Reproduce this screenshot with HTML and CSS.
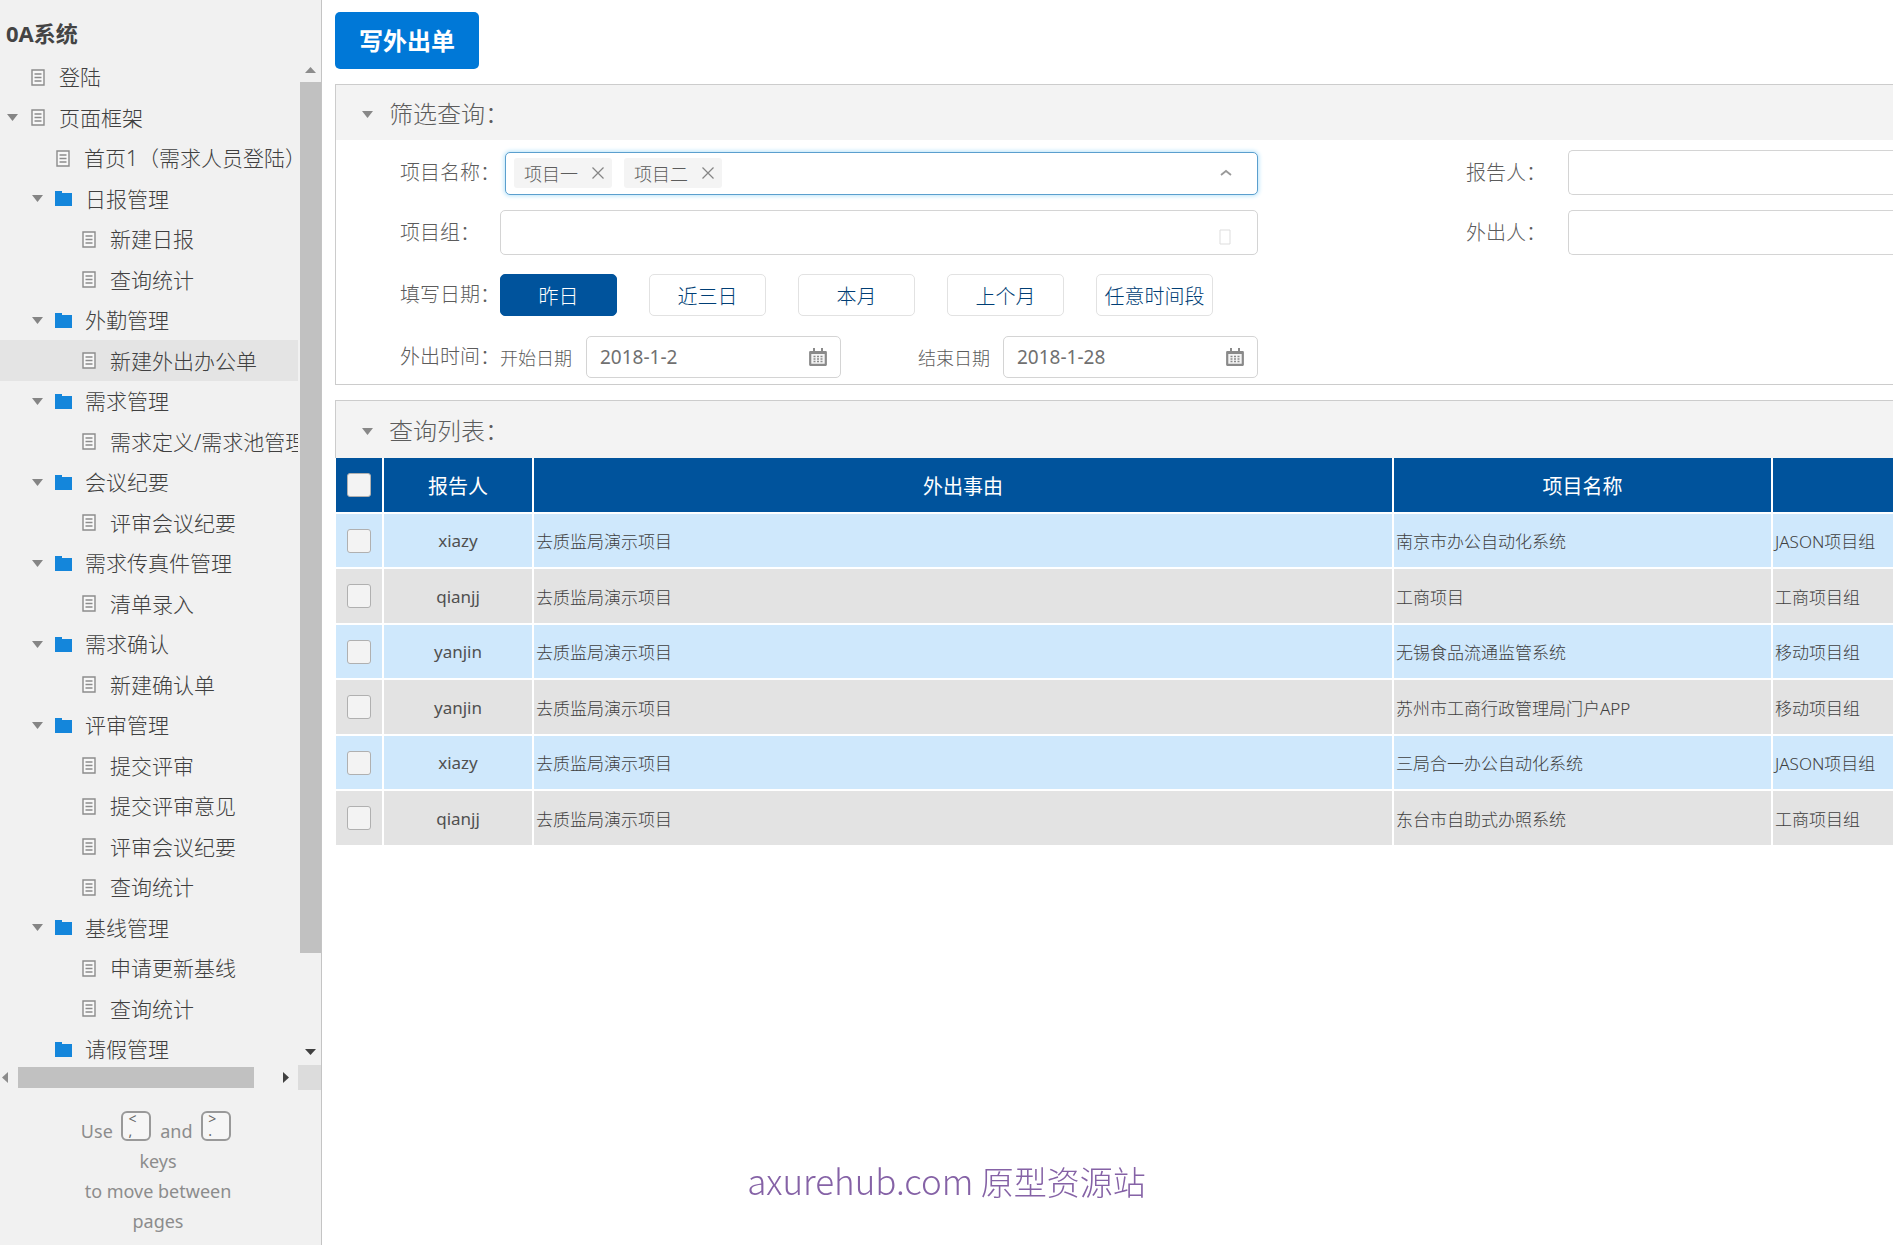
FILE: index.html
```html
<!DOCTYPE html>
<html lang="zh-CN">
<head>
<meta charset="utf-8">
<title>0A系统</title>
<link rel="stylesheet" href="styles.css">
</head>
<body>
<svg class="defs" aria-hidden="true">
  <symbol id="doc" viewBox="0 0 14 17"><path d="M1 1h12v15H1z" fill="#f8f8f8" stroke="#8c8c8c" stroke-width="1.4"/><path d="M3.500 5h7M3.500 8.500h7M3.500 12h7" stroke="#8c8c8c" stroke-width="1.300"/></symbol>
  <symbol id="folder" viewBox="0 0 17 15"><path d="M0 0h7v2h10v13H0z" fill="#1486db"/></symbol>
  <symbol id="down" viewBox="0 0 11 7"><path d="M0 0h11L5.500 7z" fill="currentColor"/></symbol>
  <symbol id="calendar" viewBox="0 0 18 18"><path d="M1.200 4.200h15.600v12.600H1.200z" fill="#f4f4f4" stroke="#8a8a8a" stroke-width="2.200" stroke-linejoin="round"/><path d="M1 4.500h16" stroke="#8a8a8a" stroke-width="3"/><path d="M5 0v4M13 0v4" stroke="#8a8a8a" stroke-width="2"/><path d="M4.500 8.500h2m1.500 0h2m1.500 0h2M4.500 11h2m1.500 0h2m1.500 0h2M4.500 13.500h2m1.500 0h2m1.500 0h2" stroke="#8a8a8a" stroke-width="1.500"/></symbol>
  <symbol id="close" viewBox="0 0 12 12"><path d="M.5.5l11 11M11.500.5l-11 11" stroke="#858585" stroke-width="1.200"/></symbol>
</svg>
<div class="app">
  <aside class="sidebar">
    <h1 class="site">0A系统</h1>
    <div class="scroller">
      <nav class="tree">
        <a href="#"><i class="arrow"></i><svg class="doc"><use href="#doc"/></svg>登陆</a>
        <a href="#"><svg class="arrow"><use href="#down"/></svg><svg class="doc"><use href="#doc"/></svg>页面框架</a>
        <a href="#" class="l1"><i class="arrow"></i><svg class="doc"><use href="#doc"/></svg>首页1（需求人员登陆）</a>
        <a href="#" class="l1"><svg class="arrow"><use href="#down"/></svg><svg class="folder"><use href="#folder"/></svg>日报管理</a>
        <a href="#" class="l2"><i class="arrow"></i><svg class="doc"><use href="#doc"/></svg>新建日报</a>
        <a href="#" class="l2"><i class="arrow"></i><svg class="doc"><use href="#doc"/></svg>查询统计</a>
        <a href="#" class="l1"><svg class="arrow"><use href="#down"/></svg><svg class="folder"><use href="#folder"/></svg>外勤管理</a>
        <a href="#" class="l2 current"><i class="arrow"></i><svg class="doc"><use href="#doc"/></svg>新建外出办公单</a>
        <a href="#" class="l1"><svg class="arrow"><use href="#down"/></svg><svg class="folder"><use href="#folder"/></svg>需求管理</a>
        <a href="#" class="l2"><i class="arrow"></i><svg class="doc"><use href="#doc"/></svg>需求定义/需求池管理</a>
        <a href="#" class="l1"><svg class="arrow"><use href="#down"/></svg><svg class="folder"><use href="#folder"/></svg>会议纪要</a>
        <a href="#" class="l2"><i class="arrow"></i><svg class="doc"><use href="#doc"/></svg>评审会议纪要</a>
        <a href="#" class="l1"><svg class="arrow"><use href="#down"/></svg><svg class="folder"><use href="#folder"/></svg>需求传真件管理</a>
        <a href="#" class="l2"><i class="arrow"></i><svg class="doc"><use href="#doc"/></svg>清单录入</a>
        <a href="#" class="l1"><svg class="arrow"><use href="#down"/></svg><svg class="folder"><use href="#folder"/></svg>需求确认</a>
        <a href="#" class="l2"><i class="arrow"></i><svg class="doc"><use href="#doc"/></svg>新建确认单</a>
        <a href="#" class="l1"><svg class="arrow"><use href="#down"/></svg><svg class="folder"><use href="#folder"/></svg>评审管理</a>
        <a href="#" class="l2"><i class="arrow"></i><svg class="doc"><use href="#doc"/></svg>提交评审</a>
        <a href="#" class="l2"><i class="arrow"></i><svg class="doc"><use href="#doc"/></svg>提交评审意见</a>
        <a href="#" class="l2"><i class="arrow"></i><svg class="doc"><use href="#doc"/></svg>评审会议纪要</a>
        <a href="#" class="l2"><i class="arrow"></i><svg class="doc"><use href="#doc"/></svg>查询统计</a>
        <a href="#" class="l1"><svg class="arrow"><use href="#down"/></svg><svg class="folder"><use href="#folder"/></svg>基线管理</a>
        <a href="#" class="l2"><i class="arrow"></i><svg class="doc"><use href="#doc"/></svg>申请更新基线</a>
        <a href="#" class="l2"><i class="arrow"></i><svg class="doc"><use href="#doc"/></svg>查询统计</a>
        <a href="#" class="l1"><i class="arrow"></i><svg class="folder"><use href="#folder"/></svg>请假管理</a>
      </nav>
      <div class="vbar">
        <svg class="tip-v"><path d="M0 6h11L5.500 0z" fill="#8c8c8c"/></svg>
        <div class="vthumb"></div>
        <svg class="tip-v"><path d="M0 0h11L5.500 6z" fill="#404040"/></svg>
      </div>
      <div class="hbar">
        <svg class="tip-h"><path d="M6 0v11L0 5.500z" fill="#8c8c8c"/></svg>
        <div class="hthumb"></div>
        <svg class="tip-h"><path d="M0 0v11l6-5.500z" fill="#404040"/></svg>
      </div>
      <div class="corner"></div>
    </div>
    <p class="hint">Use <kbd>&lt;<br>,</kbd> and <kbd>&gt;<br>.</kbd><br>keys<br>to move between<br>pages</p>
  </aside>

  <main class="main">
    <button type="button" class="primary">写外出单</button>

    <section class="panel filter">
      <h2 class="heading"><svg class="fold"><use href="#down"/></svg>筛选查询：</h2>
      <form class="form">
        <div class="fields">
          <div class="row">
            <label class="name" for="project">项目名称：</label>
            <div class="multi">
              <span class="tag">项目一<button type="button" aria-label="×"><svg><use href="#close"/></svg></button></span>
              <span class="tag">项目二<button type="button" aria-label="×"><svg><use href="#close"/></svg></button></span>
              <input id="project" type="text">
              <svg class="up"><path d="M1 6l5-4 5 4" fill="none" stroke="#999" stroke-width="1.800"/></svg>
            </div>
          </div>
          <div class="row">
            <label class="name" for="group">项目组：</label>
            <div class="box">
              <input id="group" type="text">
              <svg class="blank"><path d="M1 1h10v14H1z" fill="none" stroke="#ddd"/></svg>
            </div>
          </div>
          <div class="row days">
            <span class="name">填写日期：</span>
            <div class="choices">
              <button type="button" class="on">昨日</button>
              <button type="button">近三日</button>
              <button type="button">本月</button>
              <button type="button">上个月</button>
              <button type="button">任意时间段</button>
            </div>
          </div>
          <div class="row dates">
            <span class="name">外出时间：</span>
            <div class="range">
              <label for="from">开始日期</label>
              <div class="date"><input id="from" type="text" value="2018-1-2"><svg><use href="#calendar"/></svg></div>
              <label for="to" class="end">结束日期</label>
              <div class="date"><input id="to" type="text" value="2018-1-28"><svg><use href="#calendar"/></svg></div>
            </div>
          </div>
        </div>
        <div class="fields people">
          <div class="row">
            <label class="name" for="reporter">报告人：</label>
            <input id="reporter" class="open" type="text">
          </div>
          <div class="row">
            <label class="name" for="visitor">外出人：</label>
            <input id="visitor" class="open" type="text">
          </div>
        </div>
      </form>
    </section>

    <section class="panel list">
      <h2 class="heading"><svg class="fold"><use href="#down"/></svg>查询列表：</h2>
      <table class="grid">
        <colgroup><col class="c-check"><col class="c-who"><col><col class="c-project"><col class="c-group"></colgroup>
        <thead>
          <tr><th><input type="checkbox" aria-label="全选"></th><th>报告人</th><th>外出事由</th><th>项目名称</th><th></th></tr>
        </thead>
        <tbody>
          <tr><td><input type="checkbox" aria-label="xiazy"></td><td>xiazy</td><td>去质监局演示项目</td><td>南京市办公自动化系统</td><td>JASON项目组</td></tr>
          <tr><td><input type="checkbox" aria-label="qianjj"></td><td>qianjj</td><td>去质监局演示项目</td><td>工商项目</td><td>工商项目组</td></tr>
          <tr><td><input type="checkbox" aria-label="yanjin"></td><td>yanjin</td><td>去质监局演示项目</td><td>无锡食品流通监管系统</td><td>移动项目组</td></tr>
          <tr><td><input type="checkbox" aria-label="yanjin"></td><td>yanjin</td><td>去质监局演示项目</td><td>苏州市工商行政管理局门户APP</td><td>移动项目组</td></tr>
          <tr><td><input type="checkbox" aria-label="xiazy"></td><td>xiazy</td><td>去质监局演示项目</td><td>三局合一办公自动化系统</td><td>JASON项目组</td></tr>
          <tr><td><input type="checkbox" aria-label="qianjj"></td><td>qianjj</td><td>去质监局演示项目</td><td>东台市自助式办照系统</td><td>工商项目组</td></tr>
        </tbody>
      </table>
    </section>
  </main>
</div>
<div class="watermark"><span class="domain">axurehub.com</span> 原型资源站</div>
</body>
</html>
```
FILE: styles.css
```css
* { box-sizing: border-box; }

body {
  margin: 0;
  background: #fff;
  color: #5c5c5c;
  font-family: "Noto Sans", "Noto Sans CJK SC", sans-serif;
  font-size: 20px;
  font-weight: 300;
}

svg { display: block; flex: none; }
button, input { font: inherit; color: inherit; }
h1, h2, p { margin: 0; }
.defs { width: 0; height: 0; position: absolute; }

.app { display: flex; min-height: 100vh; }

/* Sidebar */
.sidebar {
  flex: none;
  width: 322px;
  height: 100vh;
  display: flex;
  flex-direction: column;
  background: #f1f1f1;
  border-right: 1px solid #c4c4c4;
}
.site {
  padding: 17px 6px 8px;
  height: 57px;
  line-height: 32px;
  font-size: 22px;
  font-weight: 700;
  color: #444;
}
.scroller {
  flex: 1;
  min-height: 0;
  display: grid;
  grid-template-columns: minmax(0, 1fr) 23px;
  grid-template-rows: minmax(0, 1fr) 25px;
}
.tree { overflow: hidden; }
.tree a {
  display: flex;
  align-items: center;
  height: 40px;
  padding: 0 0 2px 7px;
  color: #404040;
  font-size: 21px;
  text-decoration: none;
  white-space: nowrap;
}
.tree a:nth-child(even) { height: 41px; }
.tree a.l1 { padding-left: 32px; }
.tree a.l2 { padding-left: 58px; }
.tree a.current { background: #e4e4e4; }
.arrow { flex: none; width: 11px; height: 7px; margin-top: 2px; color: #858585; }
.doc { width: 14px; height: 17px; margin: 2px 14px 0 13px; }
.folder { width: 17px; height: 15px; margin: 2px 13px 0 12px; }

.vbar {
  display: flex;
  flex-direction: column;
  align-items: center;
  padding: 10px 0 10px 2px;
}
.tip-v { width: 11px; height: 6px; }
.vthumb { width: 100%; flex: 0 1 871px; margin: 9px 0 auto; background: #c1c1c1; }
.hbar { display: flex; align-items: center; padding: 0 9px 0 2px; }
.tip-h { width: 6px; height: 11px; }
.hthumb { flex: 0 1 236px; height: 21px; margin: 0 auto 0 10px; background: #c1c1c1; }
.corner { background: #dcdcdc; }

.hint {
  height: 155px;
  padding: 21px 5px 0 0;
  font-size: 18px;
  font-weight: 400;
  line-height: 30px;
  text-align: center;
  color: #8c8c8c;
}
.hint kbd {
  display: inline-block;
  overflow: hidden;
  width: 30px;
  height: 30px;
  margin: 0 4px;
  padding-left: 5px;
  border: 2px solid #999;
  border-radius: 6px;
  background: #f6f6f6;
  font-family: inherit;
  font-size: 14px;
  line-height: 12px;
  text-align: left;
  vertical-align: -3px;
  color: #666;
}

/* Main */
.main { flex: 1; min-width: 0; padding: 12px 0 0 13px; }
.primary {
  display: block;
  width: 144px;
  height: 57px;
  padding: 0 0 2px;
  border: 0;
  border-radius: 5px;
  background: #0078d7;
  color: #fff;
  font-size: 24px;
  font-weight: 700;
}
.panel { border-top: 1px solid #ccc; }
.filter { margin-top: 15px; border-left: 1px solid #ccc; border-bottom: 1px solid #ccc; }
.list { margin-top: 15px; }
.heading {
  display: flex;
  align-items: center;
  gap: 16px;
  height: 55px;
  padding-left: 26px;
  background: #f3f3f3;
  font-size: 24px;
  font-weight: 300;
}
.list .heading { height: 57px; border-left: 1px solid #ccc; }
.fold { width: 11px; height: 7px; margin-top: 4px; color: #888; }

.form {
  display: grid;
  grid-template-columns: minmax(0, 858fr) minmax(0, 427fr);
  column-gap: 208px;
  padding: 10px 0 6px 64px;
}
.row { display: flex; align-items: center; height: 45px; margin-bottom: 15px; }
.name { flex: none; width: 100px; line-height: 30px; white-space: nowrap; }
.people .name { width: 102px; }
.days { height: 42px; margin: 19px 0 20px; }
.dates { height: 42px; margin: 0; }

input[type="text"] { border: 0; padding: 0; outline: 0; background: none; min-width: 0; }
.box, .date, .open, .multi { border: 1px solid #d4d4d4; border-radius: 5px; background: #fff; }
.box { flex: 1; display: flex; align-items: center; height: 45px; padding: 0 26px 0 12px; }
.box input, .multi input { flex: 1; }
.blank { width: 12px; height: 16px; margin-top: 8px; }
.multi {
  flex: 1;
  display: flex;
  align-items: center;
  gap: 12px;
  height: 43px;
  margin: 2px 0 0 5px;
  padding: 0 25px 2px 8px;
  border-color: #5b9fce;
  box-shadow: 0 0 4px 1px #b9e4fa;
}
.up { width: 12px; height: 8px; }
.tag {
  display: flex;
  align-items: center;
  justify-content: space-between;
  width: 98px;
  height: 30px;
  padding: 0 8px 0 10px;
  border-radius: 3px;
  background: #f4f4f4;
  font-size: 18px;
  white-space: nowrap;
}
.tag button { padding: 0; border: 0; background: none; }
.tag svg { width: 12px; height: 12px; }
.people .row input.open {
  flex: 1;
  height: 45px;
  padding: 0 12px;
  border: 1px solid #d4d4d4;
  border-right: 0;
  border-radius: 5px 0 0 5px;
}
.choices { display: flex; gap: 32px; }
.choices button {
  width: 117px;
  height: 42px;
  padding: 0;
  border: 1px solid #e2e2e2;
  border-radius: 5px;
  background: #fff;
  color: #003e75;
  white-space: nowrap;
}
.choices .on { border-color: #00539c; background: #00539c; color: #fff; }
.range { flex: 1; display: flex; align-items: center; font-size: 18px; }
.range label { flex: none; width: 86px; }
.range .end { margin-left: auto; width: 85px; }
.date { display: flex; align-items: center; width: 255px; height: 42px; padding: 0 13px; }
.date input { flex: 1; font-size: 19px; font-weight: 400; color: #707070; }
.date svg { width: 18px; height: 18px; }

/* Result table */
.grid { width: 100%; padding-left: 1px; table-layout: fixed; border-collapse: separate; border-spacing: 0; }
.c-check { width: 48px; }
.c-who { width: 150px; }
.c-project { width: 379px; }
.c-group { width: 120px; }
.grid th {
  height: 56px;
  padding: 0;
  border: solid #fff;
  border-width: 0 2px 2px 0;
  background: #00539c;
  color: #fff;
  font-size: 20px;
  font-weight: 400;
}
.grid td {
  height: 55px;
  padding: 0 2px;
  border: solid #fff;
  border-width: 0 2px 2px 0;
  background: #cfe8fc;
  color: #404040;
  font-size: 17px;
  white-space: nowrap;
}
.grid tr:nth-child(even) td { height: 56px; background: #e3e3e3; }
.grid td:nth-child(-n+2) { text-align: center; }
.grid td:nth-child(2) { font-weight: 400; color: #505050; }
.grid th:last-child, .grid td:last-child { border-right: 0; }
.grid input {
  appearance: none;
  display: block;
  width: 24px;
  height: 24px;
  margin: 0 auto;
  border: 1px solid #b0b0b0;
  border-radius: 3px;
  background: #f3f3f3;
}

/* Floats over the page, centred in the window */
.watermark {
  position: fixed;
  left: 0;
  right: 0;
  bottom: 40px;
  text-align: center;
  pointer-events: none;
  font-family: "Noto Sans CJK SC", sans-serif;
  font-size: 33px;
  line-height: 48px;
  color: #8562a6;
}
.domain { font-size: 35px; }
```
